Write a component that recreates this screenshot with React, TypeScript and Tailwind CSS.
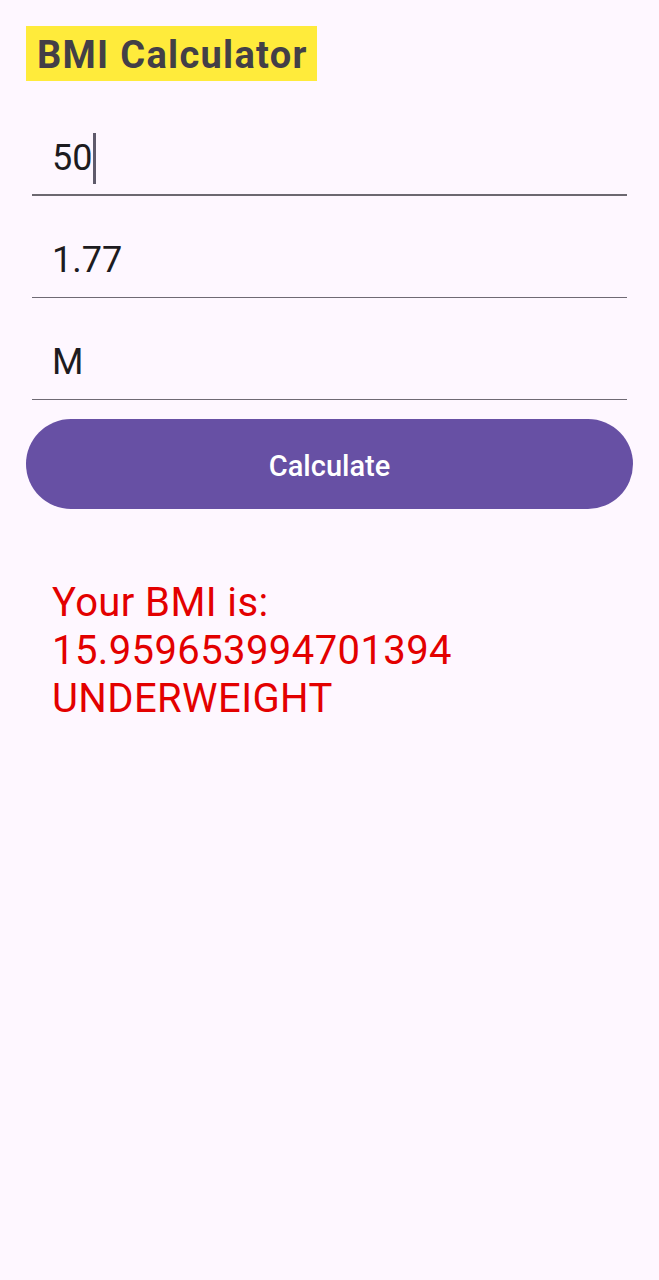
import React from "react";

export default function App() {
  return (
    <div
      className="min-h-[1280px] w-full bg-[#FEF7FF] pt-[26px]"
      style={{ fontFamily: "Roboto, 'Noto Sans', sans-serif" }}
    >
      <div className="ml-[26px] flex h-[55px] w-[291px] items-center bg-[#FFEB3B] pl-[11px] pt-[3px]">
        <span className="text-[38px] font-bold leading-none tracking-[1.3px] text-[#433f47]">BMI Calculator</span>
      </div>

      <div className="ml-[32px] mt-[13px] w-[595px]">
        <div className="border-b-2 border-[#6c6870] pb-[16px] pl-[20px] pt-[44px]">
          <div className="flex h-[40px] items-center">
            <span className="text-[36px] leading-[40px] text-[#1D1B20]">50</span>
            <span className="ml-[1px] h-[51px] w-[3px] shrink-0 bg-[#5f5a6b]" />
          </div>
        </div>
        <div className="border-b border-[#6f6a74] pb-[17px] pl-[20px] pt-[44px]">
          <div className="h-[40px] text-[36px] leading-[40px] text-[#1D1B20]">1.77</div>
        </div>
        <div className="border-b border-[#6f6a74] pb-[17px] pl-[20px] pt-[44px]">
          <div className="h-[40px] text-[36px] leading-[40px] text-[#1D1B20]">M</div>
        </div>
      </div>

      <button className="ml-[26px] mt-[19px] flex h-[90px] w-[607px] items-center justify-center rounded-full bg-[#6750A4] pt-[6px] text-[29px] font-medium text-white">
        Calculate
      </button>

      <div className="ml-[52px] mt-[70px] text-[40px] leading-[48px] tracking-[0.4px] text-[#E30000]">
        <div>Your BMI is:</div>
        <div>15.959653994701394</div>
        <div>UNDERWEIGHT</div>
      </div>
    </div>
  );
}
